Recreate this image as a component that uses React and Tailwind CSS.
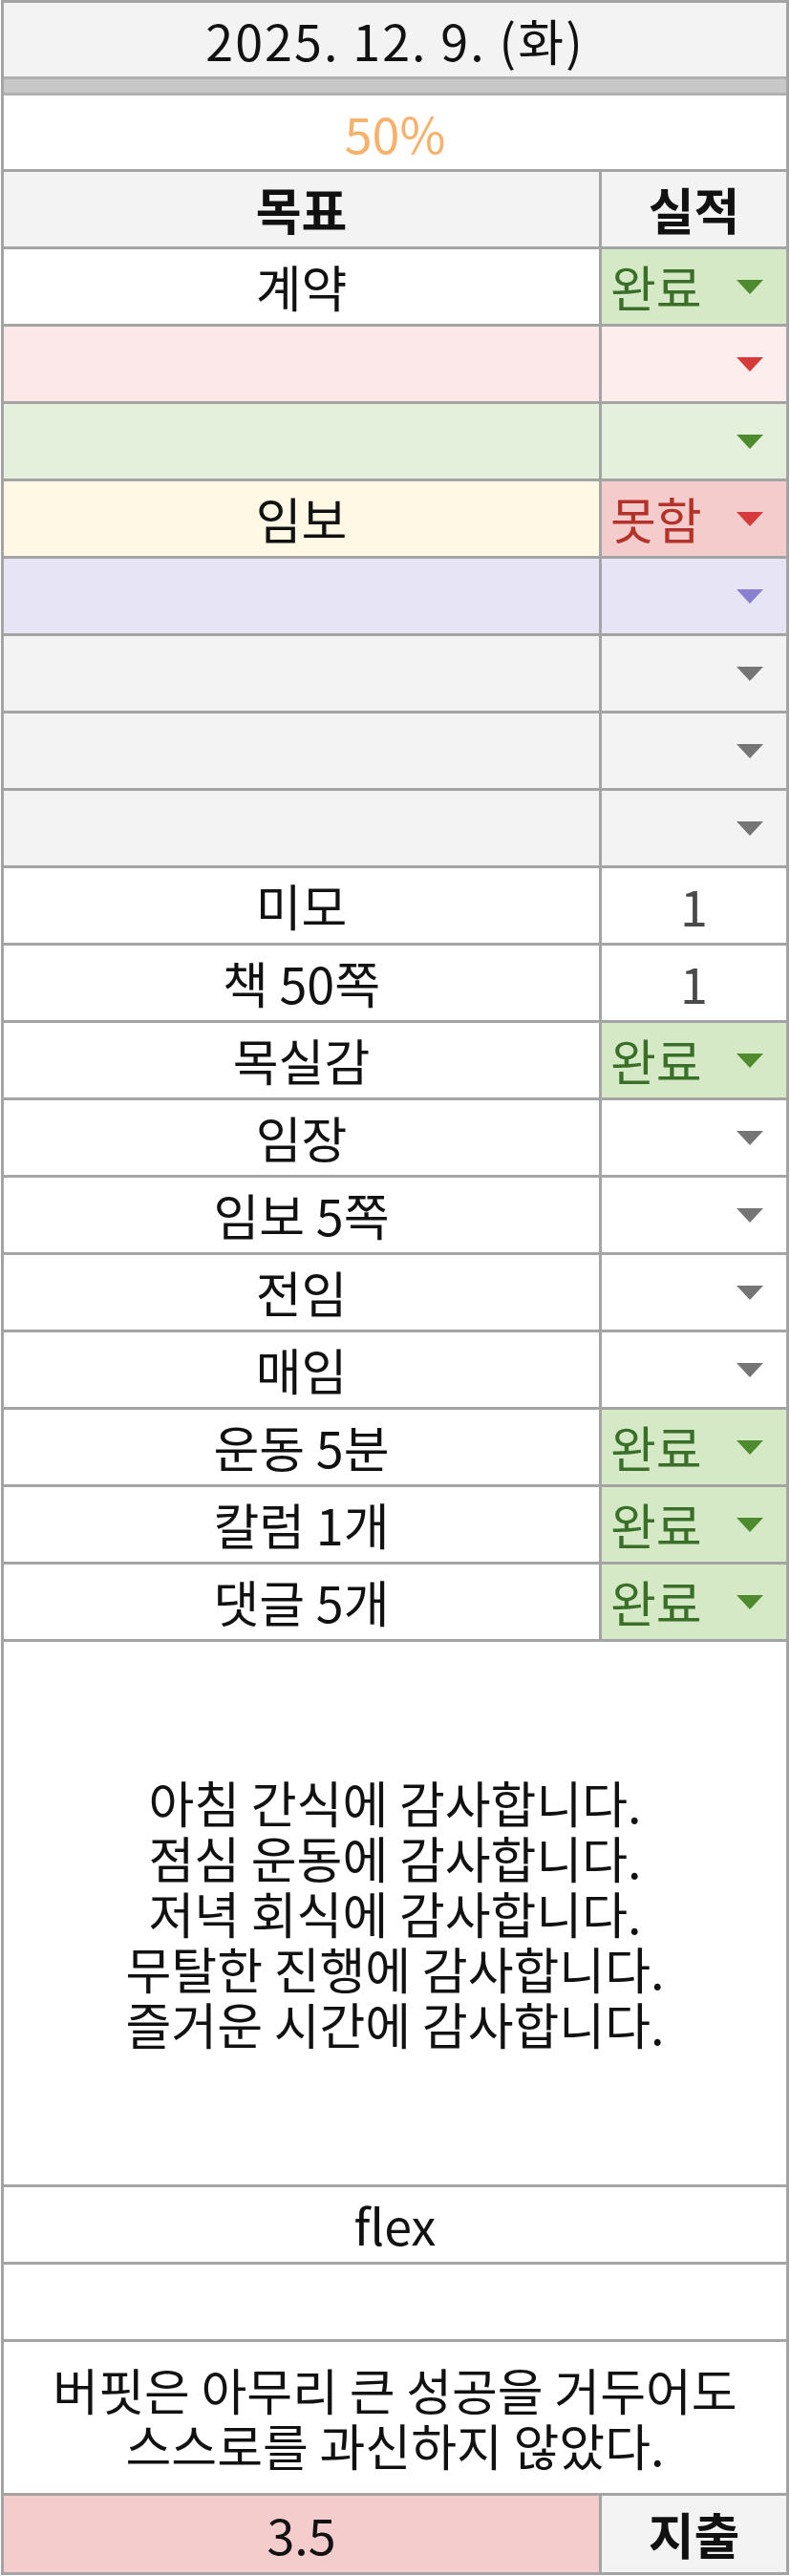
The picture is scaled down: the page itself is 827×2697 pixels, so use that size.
const goals = [
	{ goal: '계약', left: 'bg-white', right: 'bg-[#d6e9c6]', value: '완료', valueText: 'text-[#3a6f2a]', arrow: 'fill-[#4e8a2e]' },
	{ goal: '', left: 'bg-[#fce8e8]', right: 'bg-[#fdeded]', arrow: 'fill-[#d63a3a]' },
	{ goal: '', left: 'bg-[#e4efdc]', right: 'bg-[#e4efdc]', arrow: 'fill-[#4e8a2e]' },
	{ goal: '임보', left: 'bg-[#fff8e5]', right: 'bg-[#f4cccc]', value: '못함', valueText: 'text-[#b3322a]', arrow: 'fill-[#d63a3a]' },
	{ goal: '', left: 'bg-[#e7e4f6]', right: 'bg-[#e7e4f6]', arrow: 'fill-[#8b7fd0]' },
	{ goal: '', left: 'bg-[#f3f3f3]', right: 'bg-[#f3f3f3]', arrow: 'fill-[#757575]' },
	{ goal: '', left: 'bg-[#f3f3f3]', right: 'bg-[#f3f3f3]', arrow: 'fill-[#757575]' },
	{ goal: '', left: 'bg-[#f3f3f3]', right: 'bg-[#f3f3f3]', arrow: 'fill-[#757575]' },
	{ goal: '미모', left: 'bg-white', right: 'bg-white', count: '1' },
	{ goal: '책 50쪽', left: 'bg-white', right: 'bg-white', count: '1' },
	{ goal: '목실감', left: 'bg-white', right: 'bg-[#d6e9c6]', value: '완료', valueText: 'text-[#3a6f2a]', arrow: 'fill-[#4e8a2e]' },
	{ goal: '임장', left: 'bg-white', right: 'bg-white', arrow: 'fill-[#757575]' },
	{ goal: '임보 5쪽', left: 'bg-white', right: 'bg-white', arrow: 'fill-[#757575]' },
	{ goal: '전임', left: 'bg-white', right: 'bg-white', arrow: 'fill-[#757575]' },
	{ goal: '매임', left: 'bg-white', right: 'bg-white', arrow: 'fill-[#757575]' },
	{ goal: '운동 5분', left: 'bg-white', right: 'bg-[#d6e9c6]', value: '완료', valueText: 'text-[#3a6f2a]', arrow: 'fill-[#4e8a2e]' },
	{ goal: '칼럼 1개', left: 'bg-white', right: 'bg-[#d6e9c6]', value: '완료', valueText: 'text-[#3a6f2a]', arrow: 'fill-[#4e8a2e]' },
	{ goal: '댓글 5개', left: 'bg-white', right: 'bg-[#d6e9c6]', value: '완료', valueText: 'text-[#3a6f2a]', arrow: 'fill-[#4e8a2e]' },
];

const thanks = [
	'아침 간식에 감사합니다.',
	'점심 운동에 감사합니다.',
	'저녁 회식에 감사합니다.',
	'무탈한 진행에 감사합니다.',
	'즐거운 시간에 감사합니다.',
];

const Arrow = ({ className }) => (
	<svg width="28" height="15" viewBox="0 0 28 15" className={className} aria-hidden="true">
		<path d="M0 0H28L14 15Z" />
	</svg>
);

const ResultCell = ({ row }) => {
	if (row.count) {
		return <div className={`flex items-center justify-center ${row.right} text-[#4a4a4a]`}>{row.count}</div>;
	}
	return (
		<div className={`flex items-center ${row.value ? 'justify-between' : 'justify-end'} pl-[9px] pr-[24px] ${row.right}`}>
			{row.value && <span className={row.valueText}>{row.value}</span>}
			<Arrow className={row.arrow} />
		</div>
	);
};

export default function App() {
	return (
		<div className="min-h-[2697px] w-[827px] bg-white font-['Noto_Sans_CJK_KR','Noto_Sans',sans-serif] text-[52px] leading-[58px] text-[#111]">
			<div className="ml-[1px] w-[825px] border-x-[3px] border-t-[3px] border-[#a4a4a4]">
				<div className="flex h-[77px] items-center justify-center bg-[#f3f3f3] tracking-[0.04em]">2025. 12. 9. (화)</div>
				<div className="h-[20px] border-y-[3px] border-[#b0b0b0] bg-[#c8c8c8]" />
				<div className="flex h-[80px] items-center justify-center border-b-[3px] border-[#a4a4a4] text-[#f6b26b]">50%</div>

				<div className="grid grid-cols-[623px_3px_193px] border-b-[3px] border-[#a4a4a4] bg-[#f3f3f3] font-bold">
					<div className="flex h-[78px] items-center justify-center">목표</div>
					<div className="bg-[#a4a4a4]" />
					<div className="flex items-center justify-center">실적</div>
				</div>

				{goals.map((row, i) => (
					<div key={i} className="grid h-[81px] grid-cols-[623px_3px_193px] border-b-[3px] border-[#a4a4a4]">
						<div className={`flex items-center justify-center ${row.left}`}>{row.goal}</div>
						<div className="bg-[#a4a4a4]" />
						<ResultCell row={row} />
					</div>
				))}

				<div className="flex h-[571px] flex-col items-center justify-center border-b-[3px] border-[#a4a4a4] text-center">
					{thanks.map((line) => (
						<p key={line}>{line}</p>
					))}
				</div>
				<div className="flex h-[81px] items-center justify-center border-b-[3px] border-[#a4a4a4]">flex</div>
				<div className="h-[81px] border-b-[3px] border-[#a4a4a4]" />
				<div className="flex h-[161px] flex-col items-center justify-center border-b-[3px] border-[#a4a4a4] text-center">
					<p>버핏은 아무리 큰 성공을 거두어도</p>
					<p>스스로를 과신하지 않았다.</p>
				</div>

				<div className="grid h-[83px] grid-cols-[623px_3px_193px] border-b-[3px] border-[#a4a4a4]">
					<div className="flex items-center justify-center bg-[#f4cccc]">3.5</div>
					<div className="bg-[#a4a4a4]" />
					<div className="flex items-center justify-center bg-[#f3f3f3] font-bold">지출</div>
				</div>
			</div>
		</div>
	);
}
